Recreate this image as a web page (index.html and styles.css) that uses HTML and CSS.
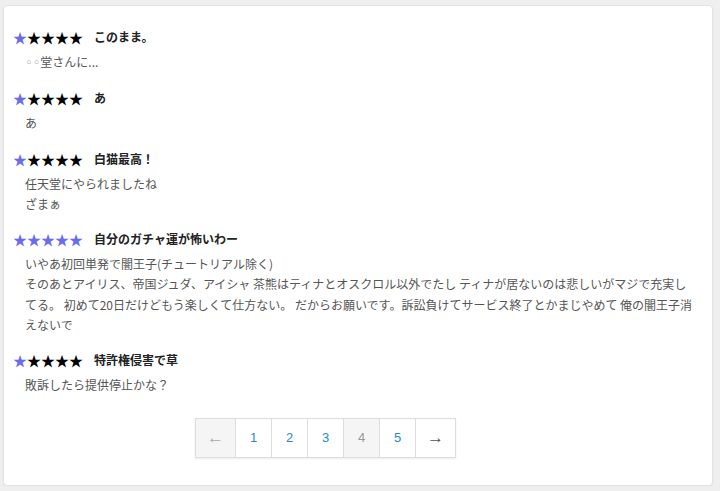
FILE: index.html
```html
<!DOCTYPE html>
<html lang="ja">
<head>
    <meta charset="UTF-8">
    <meta name="viewport" content="width=device-width, initial-scale=1.0">
    <title>レビュー</title>
    <link rel="stylesheet" href="styles.css">
</head>
<body>
    <div class="panel">
        <div class="review">
            <div class="review-head">
                <span class="stars"><span class="on">★</span>★★★★</span>
                <span class="review-title">このまま。</span>
            </div>
            <p class="review-body"><span class="masked">◦◦</span>堂さんに...</p>
        </div>

        <div class="review">
            <div class="review-head">
                <span class="stars"><span class="on">★</span>★★★★</span>
                <span class="review-title">あ</span>
            </div>
            <p class="review-body">あ</p>
        </div>

        <div class="review">
            <div class="review-head">
                <span class="stars"><span class="on">★</span>★★★★</span>
                <span class="review-title">白猫最高！</span>
            </div>
            <p class="review-body">任天堂にやられましたね<br>ざまぁ</p>
        </div>

        <div class="review">
            <div class="review-head">
                <span class="stars"><span class="on">★★★★★</span></span>
                <span class="review-title">自分のガチャ運が怖いわー</span>
            </div>
            <p class="review-body">いやあ初回単発で闇王子(チュートリアル除く)<br>そのあとアイリス、帝国ジュダ、アイシャ 茶熊はティナとオスクロル以外でたし ティナが居ないのは悲しいがマジで充実してる。 初めて20日だけどもう楽しくて仕方ない。 だからお願いです。訴訟負けてサービス終了とかまじやめて 俺の闇王子消えないで</p>
        </div>

        <div class="review">
            <div class="review-head">
                <span class="stars"><span class="on">★</span>★★★★</span>
                <span class="review-title">特許権侵害で草</span>
            </div>
            <p class="review-body">敗訴したら提供停止かな？</p>
        </div>

        <ul class="pagination">
            <li class="disabled"><span>&larr;</span></li>
            <li><a href="#">1</a></li>
            <li><a href="#">2</a></li>
            <li><a href="#">3</a></li>
            <li class="current"><span>4</span></li>
            <li><a href="#">5</a></li>
            <li><a href="#" class="next">&rarr;</a></li>
        </ul>
    </div>
</body>
</html>
```

FILE: styles.css
```css
body {
    margin: 0;
    background: #efefef;
    font-family: "Noto Sans CJK JP", "Noto Sans", sans-serif;
    font-size: 12px;
    color: #555;
}
.panel {
    box-sizing: border-box;
    width: 710px;
    height: 481px;
    margin: 5px 0 0 3px;
    padding: 21px 15px 0 9px;
    background: #fff;
    border: 1px solid #e2e2e2;
    border-radius: 4px;
    box-shadow: 0 1px 2px rgba(0, 0, 0, 0.06);
}
.review {
    margin-bottom: 15px;
}
.review-head {
    display: flex;
    align-items: center;
    height: 20px;
    margin-bottom: 5px;
}
.stars {
    font-size: 14px;
    line-height: 20px;
    color: #000;
    margin-right: 11px;
}
.stars .on {
    color: #6b6bef;
}
.review-title {
    font-weight: bold;
    color: #222;
    line-height: 20px;
}
.review-body {
    margin: 0 0 0 12px;
    line-height: 20.3px;
}
.masked {
    font-family: "DejaVu Sans", sans-serif;
    font-size: 13px;
    color: #999;
}
.pagination {
    display: flex;
    list-style: none;
    margin: 22px 0 0 182px;
    padding: 0;
    box-shadow: 0 1px 2px rgba(0, 0, 0, 0.08);
    width: max-content;
}
.pagination li a, .pagination li span {
    display: block;
    box-sizing: border-box;
    width: 37px;
    height: 40px;
    line-height: 38px;
    text-align: center;
    font-family: "Liberation Sans", sans-serif;
    font-size: 13px;
    color: #2a88c6;
    text-decoration: none;
    border: 1px solid #ddd;
    margin-left: -1px;
    background: #fff;
}
.pagination li:first-child span {
    margin-left: 0;
    width: 41px;
    font-size: 17px;
}
.pagination li:last-child a {
    width: 41px;
    font-size: 17px;
}
.pagination .disabled span {
    background: #f5f5f5;
    color: #aaa;
}
.pagination .current span {
    background: #f5f5f5;
    color: #999;
}
.pagination .next {
    color: #555;
}
```
